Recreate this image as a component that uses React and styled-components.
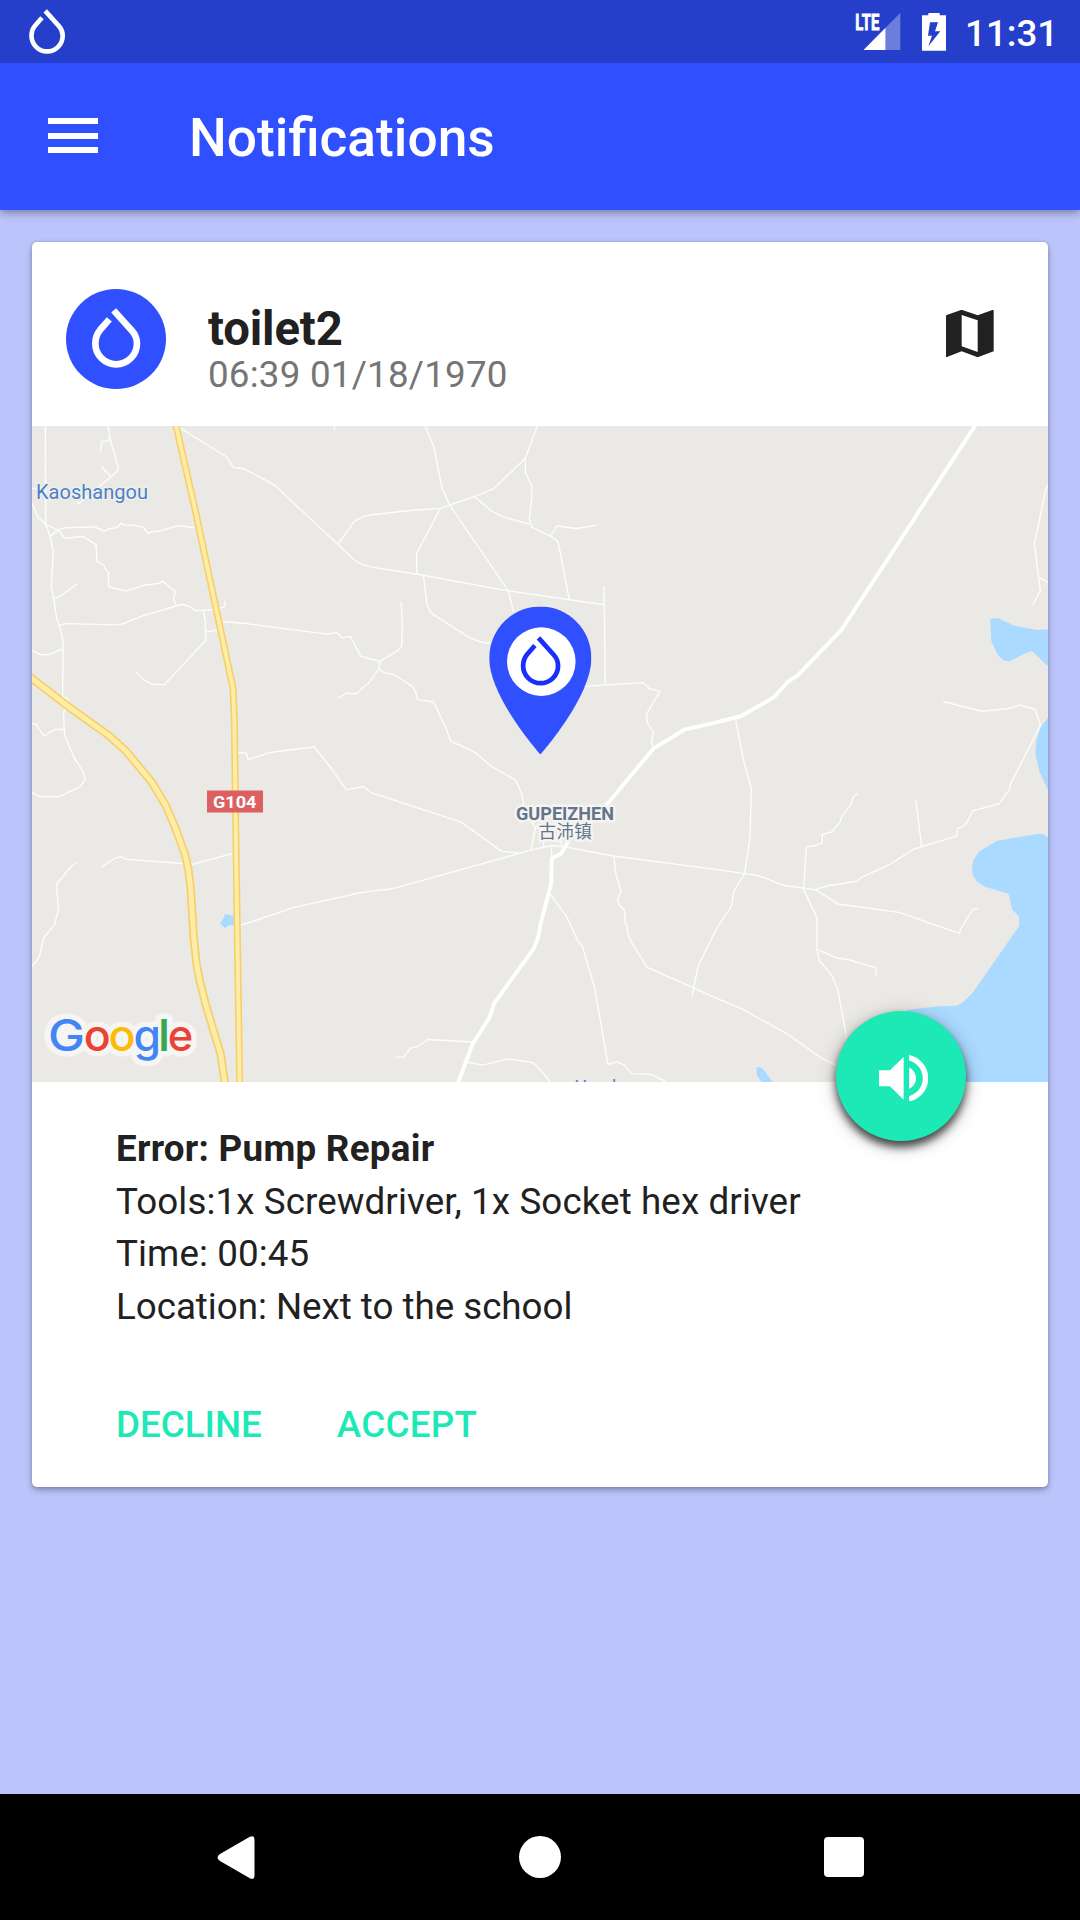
import React from "react";
import styled, { createGlobalStyle } from "styled-components";

const GlobalStyle = createGlobalStyle`
  * { box-sizing: border-box; }
  body {
    margin: 0;
    background: #bbc5fb;
    font-family: Roboto, "Noto Sans CJK SC", sans-serif;
  }
  svg { display: block; }
`;

const Screen = styled.div`
  width: 1080px;
  height: 1920px;
  display: flex;
  flex-direction: column;
  overflow: hidden;
`;

const StatusBar = styled.header`
  position: relative;
  z-index: 1;
  height: 63px;
  flex: none;
  padding: 0 24px 0 29px;
  display: flex;
  align-items: center;
  justify-content: space-between;
  background: #253fcb;
`;

const StatusIcons = styled.div`
  display: flex;
  align-items: center;
  height: 63px;
`;

const SignalIcon = styled.svg`
  width: 46px;
  height: 38px;
  margin-right: 21px;
  overflow: visible;
`;

const BatteryIcon = styled.svg`
  width: 24px;
  height: 38px;
  margin-right: 19px;
`;

const Clock = styled.span`
  width: 91px;
  font-size: 36.75px;
  font-weight: 500;
  line-height: 43px;
  padding-top: 3px;
  color: #fff;
`;

const AppBar = styled.nav`
  height: 147px;
  flex: none;
  padding-left: 48px;
  display: flex;
  align-items: center;
  gap: 91px;
  background: #304ffe;
  box-shadow: 0 2px 9px rgba(0, 0, 0, 0.42);
`;

const MenuButton = styled.button`
  width: 50px;
  height: 35px;
  margin-top: -2px;
  padding: 0;
  border: 0;
  background: none;
  display: flex;
  flex-direction: column;
  justify-content: space-between;
`;

const MenuLine = styled.span`
  height: 6px;
  background: #fff;
`;

const Title = styled.h1`
  margin: 3px 0 0;
  font-size: 53.3px;
  font-weight: 500;
  line-height: 62px;
  color: #fff;
`;

const Content = styled.main`
  flex: 1;
  padding: 32px;
`;

const Card = styled.article`
  height: 1245px;
  display: flex;
  flex-direction: column;
  border-radius: 5px;
  background: #fff;
  box-shadow: 0 3px 6px rgba(0, 0, 0, 0.3), 0 0 3px rgba(0, 0, 0, 0.15);
`;

const CardHeader = styled.div`
  height: 184px;
  flex: none;
  padding: 47px 54px 0 34px;
  display: flex;
  align-items: flex-start;
`;

const Avatar = styled.div`
  width: 100px;
  height: 100px;
  padding-top: 19px;
  border-radius: 50%;
  background: #304ffe;
  display: flex;
  justify-content: center;
  align-items: flex-start;
`;

const Heading = styled.div`
  flex: 1;
  padding: 15px 0 0 42px;
`;

const Name = styled.h2`
  margin: 0;
  font-size: 47.25px;
  font-weight: 700;
  line-height: 50px;
  letter-spacing: -0.15px;
  color: #212121;
`;

const Stamp = styled.div`
  font-size: 36.75px;
  line-height: 41px;
  letter-spacing: 0.22px;
  color: #757575;
`;

const MapIcon = styled.svg`
  width: 47.7px;
  height: 47px;
  margin-top: 21px;
`;

const MapPanel = styled.div`
  position: relative;
  height: 656px;
  flex: none;
`;

const Fab = styled.button`
  position: absolute;
  right: 82px;
  bottom: -59px;
  width: 130px;
  height: 130px;
  padding: 4px 0 0 5px;
  border: 0;
  border-radius: 50%;
  background: #1de9b6;
  box-shadow: 0 6px 9px rgba(0, 0, 0, 0.68), 0 4px 20px rgba(0, 0, 0, 0.24);
  display: flex;
  align-items: center;
  justify-content: center;
`;

const Details = styled.div`
  padding: 41px 84px 0;
`;

const Line = styled.p`
  margin: 0;
  font-size: 36.75px;
  font-weight: ${(p) => (p.$strong ? 700 : 400)};
  line-height: 52.6px;
  letter-spacing: ${(p) => p.$tracking || 0}px;
  color: #212121;
`;

const Actions = styled.div`
  padding: 66px 84px 0;
  display: flex;
  gap: 75px;
`;

const ActionButton = styled.button`
  padding: 0;
  border: 0;
  background: none;
  font-family: inherit;
  font-size: 36.75px;
  font-weight: 500;
  line-height: 52px;
  letter-spacing: ${(p) => p.$tracking || 0}px;
  color: #1de9b6;
`;

const NavBar = styled.footer`
  height: 126px;
  flex: none;
  padding: 0 216px 0 217px;
  display: flex;
  align-items: center;
  justify-content: space-between;
  background: #000;
`;

const HomeKey = styled.span`
  width: 42px;
  height: 42px;
  border-radius: 50%;
  background: #fff;
`;

const RecentsKey = styled.span`
  width: 40px;
  height: 40px;
  border-radius: 4px;
  background: #fff;
`;

function Drop({ width, height, color = "#fff", stroke = 20, ...rest }) {
  return (
    <svg width={width} height={height} viewBox="0 0 145 179" overflow="visible" {...rest}>
      <path
        d="M52 34 L24 66 C14 78 10 91 10 106.500 A62.500 62.500 0 0 0 135 106.500 C135 92 130 79 120 68 L65 7"
        fill="none"
        stroke={color}
        strokeWidth={stroke}
      />
    </svg>
  );
}

// Each survey tile holds its roads in its own units; the transform places it on the map.
const TILES = [
  {
    at: "translate(-2 -1) scale(0.33333 0.42088)",
    minor: [
      "46,0 47,236",
      "6,186 23,218 47,236 60,264 70,300 64,385 71,412 80,460 88,476 99,512 98,646 112,650 118,662 100,682 104,738 134,793 157,820 166,841 150,860 87,883 30,883 6,873",
      "234,2 241,35 265,101 260,111 243,123 147,187 140,182",
      "241,35 215,40 211,64",
      "214,98 243,123",
      "6,151 24,151",
      "60,264 87,249 106,244 195,242 223,253 239,246 260,244 273,233 282,238 312,238 342,244 354,258 364,254 390,252 413,246 446,239 493,244",
      "47,236 84,249 104,269 159,265 198,284 201,324 222,333 226,343 236,350 235,385 290,394 347,380 389,376 398,371 437,397 430,412 438,427",
      "71,412 92,406 142,377",
      "88,476 108,472 262,475 280,472 340,453 438,430 455,426 475,430 497,441 550,439 585,432 585,418",
      "520,441 526,468 527,512 403,617 366,616 341,605 319,587",
      "527,492 562,487",
      "6,536 34,546 54,546 98,532",
      "6,709 18,711 42,739 72,724 104,723",
      "440,2 590,76 610,101 642,104 734,143 975,322 1000,333 1020,336",
      "923,284 973,229 1005,216 1020,214",
      "578,467 640,471 890,497 921,493 936,506 961,502 992,549 1020,556",
      "1020,610 978,639 950,637 923,649",
      "622,778 649,779 655,795 720,778 853,765 906,818 949,867 1000,859 1020,871",
      "214,1051 258,1028 275,1026 290,1032 460,1042 487,1044 608,1018",
      "6,1287 28,1263 41,1219 73,1188 86,1150 79,1091 123,1049 140,1039",
      "632,1189 793,1146 987,1112 1020,1108",
      "912,2 914,11",
    ],
  },
  {
    at: "translate(338 -1) scale(0.33333 0.42088)",
    minor: [
      "166,2 192,54 216,150 239,190 415,394 431,444",
      "0,214 120,203 213,198 239,190 313,170 372,151 466,79 502,2",
      "466,79 466,112 485,144 485,175 478,224 486,243 541,264 564,277 598,414",
      "313,170 364,204 398,218 480,236",
      "541,264 561,240 620,246 681,238",
      "210,200 140,305 140,353",
      "0,337 160,357 415,394 702,427",
      "702,383 706,618",
      "160,357 171,427 184,447 300,506 330,515 360,519",
      "640,621 706,618 818,612 838,626 870,633 829,687 833,710 851,729 845,752 850,770",
      "93,419 97,472 95,526 85,535 29,562 0,555",
      "0,609 26,580 29,562",
      "26,580 40,587 74,594 127,621 138,635 142,652 191,658 230,724 242,751 311,776 368,813 437,844 455,875 464,915 496,958",
      "0,873 272,943 395,1013 445,1017",
      "0,1108 66,1102 483,1010 545,999 588,1003 731,1024 1020,1054",
      "496,958 483,1010",
      "521,1003 521,985 575,991 575,1003",
      "494,958 508,948 560,948",
      "545,1003 545,1030",
      "540,1114 590,1168 625,1228 637,1238 674,1338 714,1519 742,1513 765,1522 783,1541 844,1543 888,1560",
      "731,1024 738,1068 753,1107 743,1128 750,1143 763,1151 766,1186 771,1190 774,1210 785,1230 832,1289 968,1336 1020,1355",
      "1020,1228 984,1286 966,1358",
      "308,1466 174,1460 145,1476 122,1480 101,1502 76,1502",
      "293,1514 338,1521 415,1506 488,1515 502,1524 540,1560",
    ],
  },
  {
    at: "translate(678 -1) scale(0.33333 0.42088)",
    minor: [
      "77,700 100,795 124,863 120,980 104,1066 71,1108 65,1143 23,1192 0,1228",
      "0,1054 104,1066 142,1070 223,1094 316,1104 357,1094 442,1084 454,1075 540,1044 610,1008 740,977 743,958 757,955 770,945 788,917 867,900 900,864 902,852 991,714 976,676 930,665 895,674 814,680 699,657",
      "316,1104 384,1138 567,1158 748,1208 752,1197 790,1149 803,1150",
      "281,1104 289,1003 318,999 337,992 337,973 365,967 390,944 395,930 422,903 428,885 444,875",
      "281,1104 321,1171 321,1246 328,1272 365,1308 383,1340 410,1456",
      "321,1246 382,1267 414,1270 498,1290 499,1308",
      "617,889 635,1002",
      "1014,142 1006,158 973,283 991,394 969,426",
      "988,363 1014,374",
      "0,1355 97,1388 232,1447 332,1503 380,1522",
    ],
  },
];

const WATER = [
  "841,462 850,459 866,460 913,477 980,487 1014,485 1014,573 966,537 949,541 900,561 883,560 865,548 844,514",
  "1014,695 993,717 979,750 976,783 989,825 1014,867",
  "1014,980 1000,973 987,971 862,988 808,1013 790,1034 786,1055 788,1070 802,1085 825,1097 895,1114 907,1152 927,1167 928,1190 787,1350 758,1372 740,1380 685,1381 590,1390 580,1562 1014,1562",
  "139,1528 147,1525 158,1529 187,1561 155,1561 141,1545",
];

const HIGHWAYS = [
  { points: "435,-10 495,200 566,465 609,625 613,700 618,1000 629,1570", casing: 7, core: 3.900 },
  {
    points: "-6,595 120,672 235,737 288,775 365,848 408,905 436,957 465,1020 475,1056 482,1100 491,1216 499,1277 509,1320 530,1385 572,1495 586,1570",
    casing: 8.300,
    core: 5,
  },
];

const GOOGLE = [
  ["G", 16, "#4285f4", 37],
  ["o", 51.800, "#ea4335", 27],
  ["o", 76.500, "#fbbc05", 27],
  ["g", 101.500, "#4285f4", 27.500],
  ["l", 125.800, "#34a853", 12.500],
  ["e", 135.800, "#ea4335", 25.500],
];

function RoadMap() {
  const fixed = { fill: "none", vectorEffect: "non-scaling-stroke", strokeLinejoin: "round" };
  return (
    <svg width="1016" height="656" viewBox="0 0 1016 656" fontFamily="Roboto, 'Noto Sans CJK SC', sans-serif">
      <rect width="1016" height="656" fill="#eae9e5" />
      <g transform={TILES[2].at} fill="#aadaff">
        {WATER.map((p) => (
          <polygon key={p} points={p} />
        ))}
      </g>
      <polygon transform={TILES[0].at} points="585,1162 611,1166 611,1188 596,1189 585,1195 570,1184 581,1172" fill="#aadaff" />
      {TILES.map((tile) => (
        <g key={tile.at} transform={tile.at} stroke="#fdfdfc" strokeWidth="1.4">
          {tile.minor.map((p) => (
            <polyline key={p} points={p} {...fixed} />
          ))}
        </g>
      ))}
      <g stroke="#fff" strokeWidth="3.9">
        <polyline
          transform={TILES[1].at}
          points="263,1566 308,1470 358,1409 372,1375 492,1243 505,1215 511,1188 544,1088 545,1030 574,1018 600,982 720,893 850,769 943,724 1020,710"
          {...fixed}
        />
        <polyline transform={TILES[2].at} points="0,710 92,692 192,647 235,609 263,595 395,486 800,-4" {...fixed} />
      </g>
      <g transform={TILES[0].at}>
        {HIGHWAYS.map((h) => (
          <g key={h.casing}>
            <polyline points={h.points} stroke="#f5cf68" strokeWidth={h.casing} {...fixed} />
            <polyline points={h.points} stroke="#ffeca6" strokeWidth={h.core} {...fixed} />
          </g>
        ))}
      </g>

      <text x="4" y="72.800" fontSize="20" fill="#4b80c3" textLength="112" stroke="#f2f1ef" strokeWidth="2" paintOrder="stroke">Kaoshangou</text>
      <rect x="175" y="364.500" width="56" height="22" fill="#dc6062" />
      <text x="181" y="381.500" fontSize="17" fontWeight="700" fill="#fff" textLength="43.500" lengthAdjust="spacingAndGlyphs">G104</text>
      <g fill="#63758a" stroke="#f5f4f2" strokeWidth="5" strokeLinejoin="round" paintOrder="stroke">
        <text x="484" y="393.500" fontSize="18" fontWeight="700" textLength="98" lengthAdjust="spacingAndGlyphs">GUPEIZHEN</text>
        <text x="506.500" y="411.500" fontSize="17.700" textLength="53.500">古沛镇</text>
      </g>
      <text x="542.500" y="667" fontSize="17.500" fill="#4b80c3">Hand</text>

      <g fontFamily="Inter, sans-serif" fontSize="44" fontWeight="500">
        {["halo", "ink"].map((pass) =>
          GOOGLE.map(([letter, x, color, advance]) => (
            <text
              key={pass + x}
              x={x}
              y="625"
              textLength={advance}
              lengthAdjust="spacingAndGlyphs"
              fill={pass === "halo" ? "#f6f5f3" : color}
              stroke={pass === "halo" ? "#f6f5f3" : "none"}
              strokeWidth={pass === "halo" ? 11 : 0}
              strokeLinejoin="round"
            >
              {letter}
            </text>
          ))
        )}
      </g>

      <svg x="457.200" y="180.400" width="102.200" height="148" viewBox="5 2 14 20" preserveAspectRatio="none">
        <path fill="#304ffe" d="M12 2C8.130 2 5 5.130 5 9c0 5.250 7 13 7 13s7-7.750 7-13c0-3.870-3.130-7-7-7z" />
      </svg>
      <circle cx="509.300" cy="235.600" r="34.300" fill="#fff" />
      <Drop x="488.300" y="210" width="40.600" height="50" color="#1a2ffb" stroke="17" />
    </svg>
  );
}

export default function App() {
  return (
    <>
      <GlobalStyle />
      <Screen>
        <StatusBar>
          <Drop width="36.200" height="45" stroke="18.500" />
          <StatusIcons>
            <SignalIcon viewBox="0 0 46 38">
              <text x="0.300" y="16.700" fontFamily="Roboto, sans-serif" fontSize="21.500" fontWeight="700" fill="#fff" stroke="#fff" strokeWidth="0.8" textLength="24" lengthAdjust="spacingAndGlyphs">LTE</text>
              <path d="M45.300 0 V37 H30.500 V14.700 Z" fill="#fff" fillOpacity="0.330" />
              <path d="M30.500 14.700 V37 H8.500 Z" fill="#fff" />
            </SignalIcon>
            <BatteryIcon viewBox="306 36 72 114" preserveAspectRatio="none">
              <path
                fill="#fff"
                fillRule="evenodd"
                d="M325 36H359V43H378V149H306V43H325ZM330 64L324 104H336L325 136L361 91H345L354 64Z"
              />
            </BatteryIcon>
            <Clock>11:31</Clock>
          </StatusIcons>
        </StatusBar>
        <AppBar>
          <MenuButton aria-label="Menu">
            <MenuLine />
            <MenuLine />
            <MenuLine />
          </MenuButton>
          <Title>Notifications</Title>
        </AppBar>
        <Content>
          <Card>
            <CardHeader>
              <Avatar>
                <Drop width="48.300" height="59.700" />
              </Avatar>
              <Heading>
                <Name>toilet2</Name>
                <Stamp>06:39 01/18/1970</Stamp>
              </Heading>
              <MapIcon viewBox="138 240 143 141">
                <path
                  fill="#212121"
                  fillRule="evenodd"
                  d="M138 256L183 240H187L233 256L277 240H279Q281 240 281 243V364L235 381H231L185 364L141 381H138ZM185 255V349L233 366V271Z"
                />
              </MapIcon>
            </CardHeader>
            <MapPanel>
              <RoadMap />
              <Fab aria-label="Read aloud">
                <svg width="49.300" height="46.700" viewBox="3 3.230 18 17.540" preserveAspectRatio="none">
                  <path
                    fill="#fff"
                    d="M3 9v6h4l5 5V4L7 9H3zm13.500 3c0-1.770-1.020-3.290-2.500-4.030v8.050c1.480-.73 2.500-2.250 2.500-4.020zM14 3.230v2.060c2.890.86 5 3.540 5 6.710s-2.110 5.850-5 6.710v2.060c4.010-.91 7-4.490 7-8.770s-2.990-7.860-7-8.770z"
                  />
                </svg>
              </Fab>
            </MapPanel>
            <Details>
              <Line $strong $tracking={0.27}>Error: Pump Repair</Line>
              <Line $tracking={0.1}>Tools:1x Screwdriver, 1x Socket hex driver</Line>
              <Line $tracking={0.1}>Time: 00:45</Line>
              <Line $tracking={-0.03}>Location: Next to the school</Line>
            </Details>
            <Actions>
              <ActionButton>DECLINE</ActionButton>
              <ActionButton $tracking={0.25}>ACCEPT</ActionButton>
            </Actions>
          </Card>
        </Content>
        <NavBar>
          <svg width="38" height="43" viewBox="0 0 38 43">
            <path d="M32 1.300Q37.500-2 37.500 4V39Q37.500 45 32 41.700L3 25Q-2 21.500 3 18Z" fill="#fff" />
          </svg>
          <HomeKey />
          <RecentsKey />
        </NavBar>
      </Screen>
    </>
  );
}
